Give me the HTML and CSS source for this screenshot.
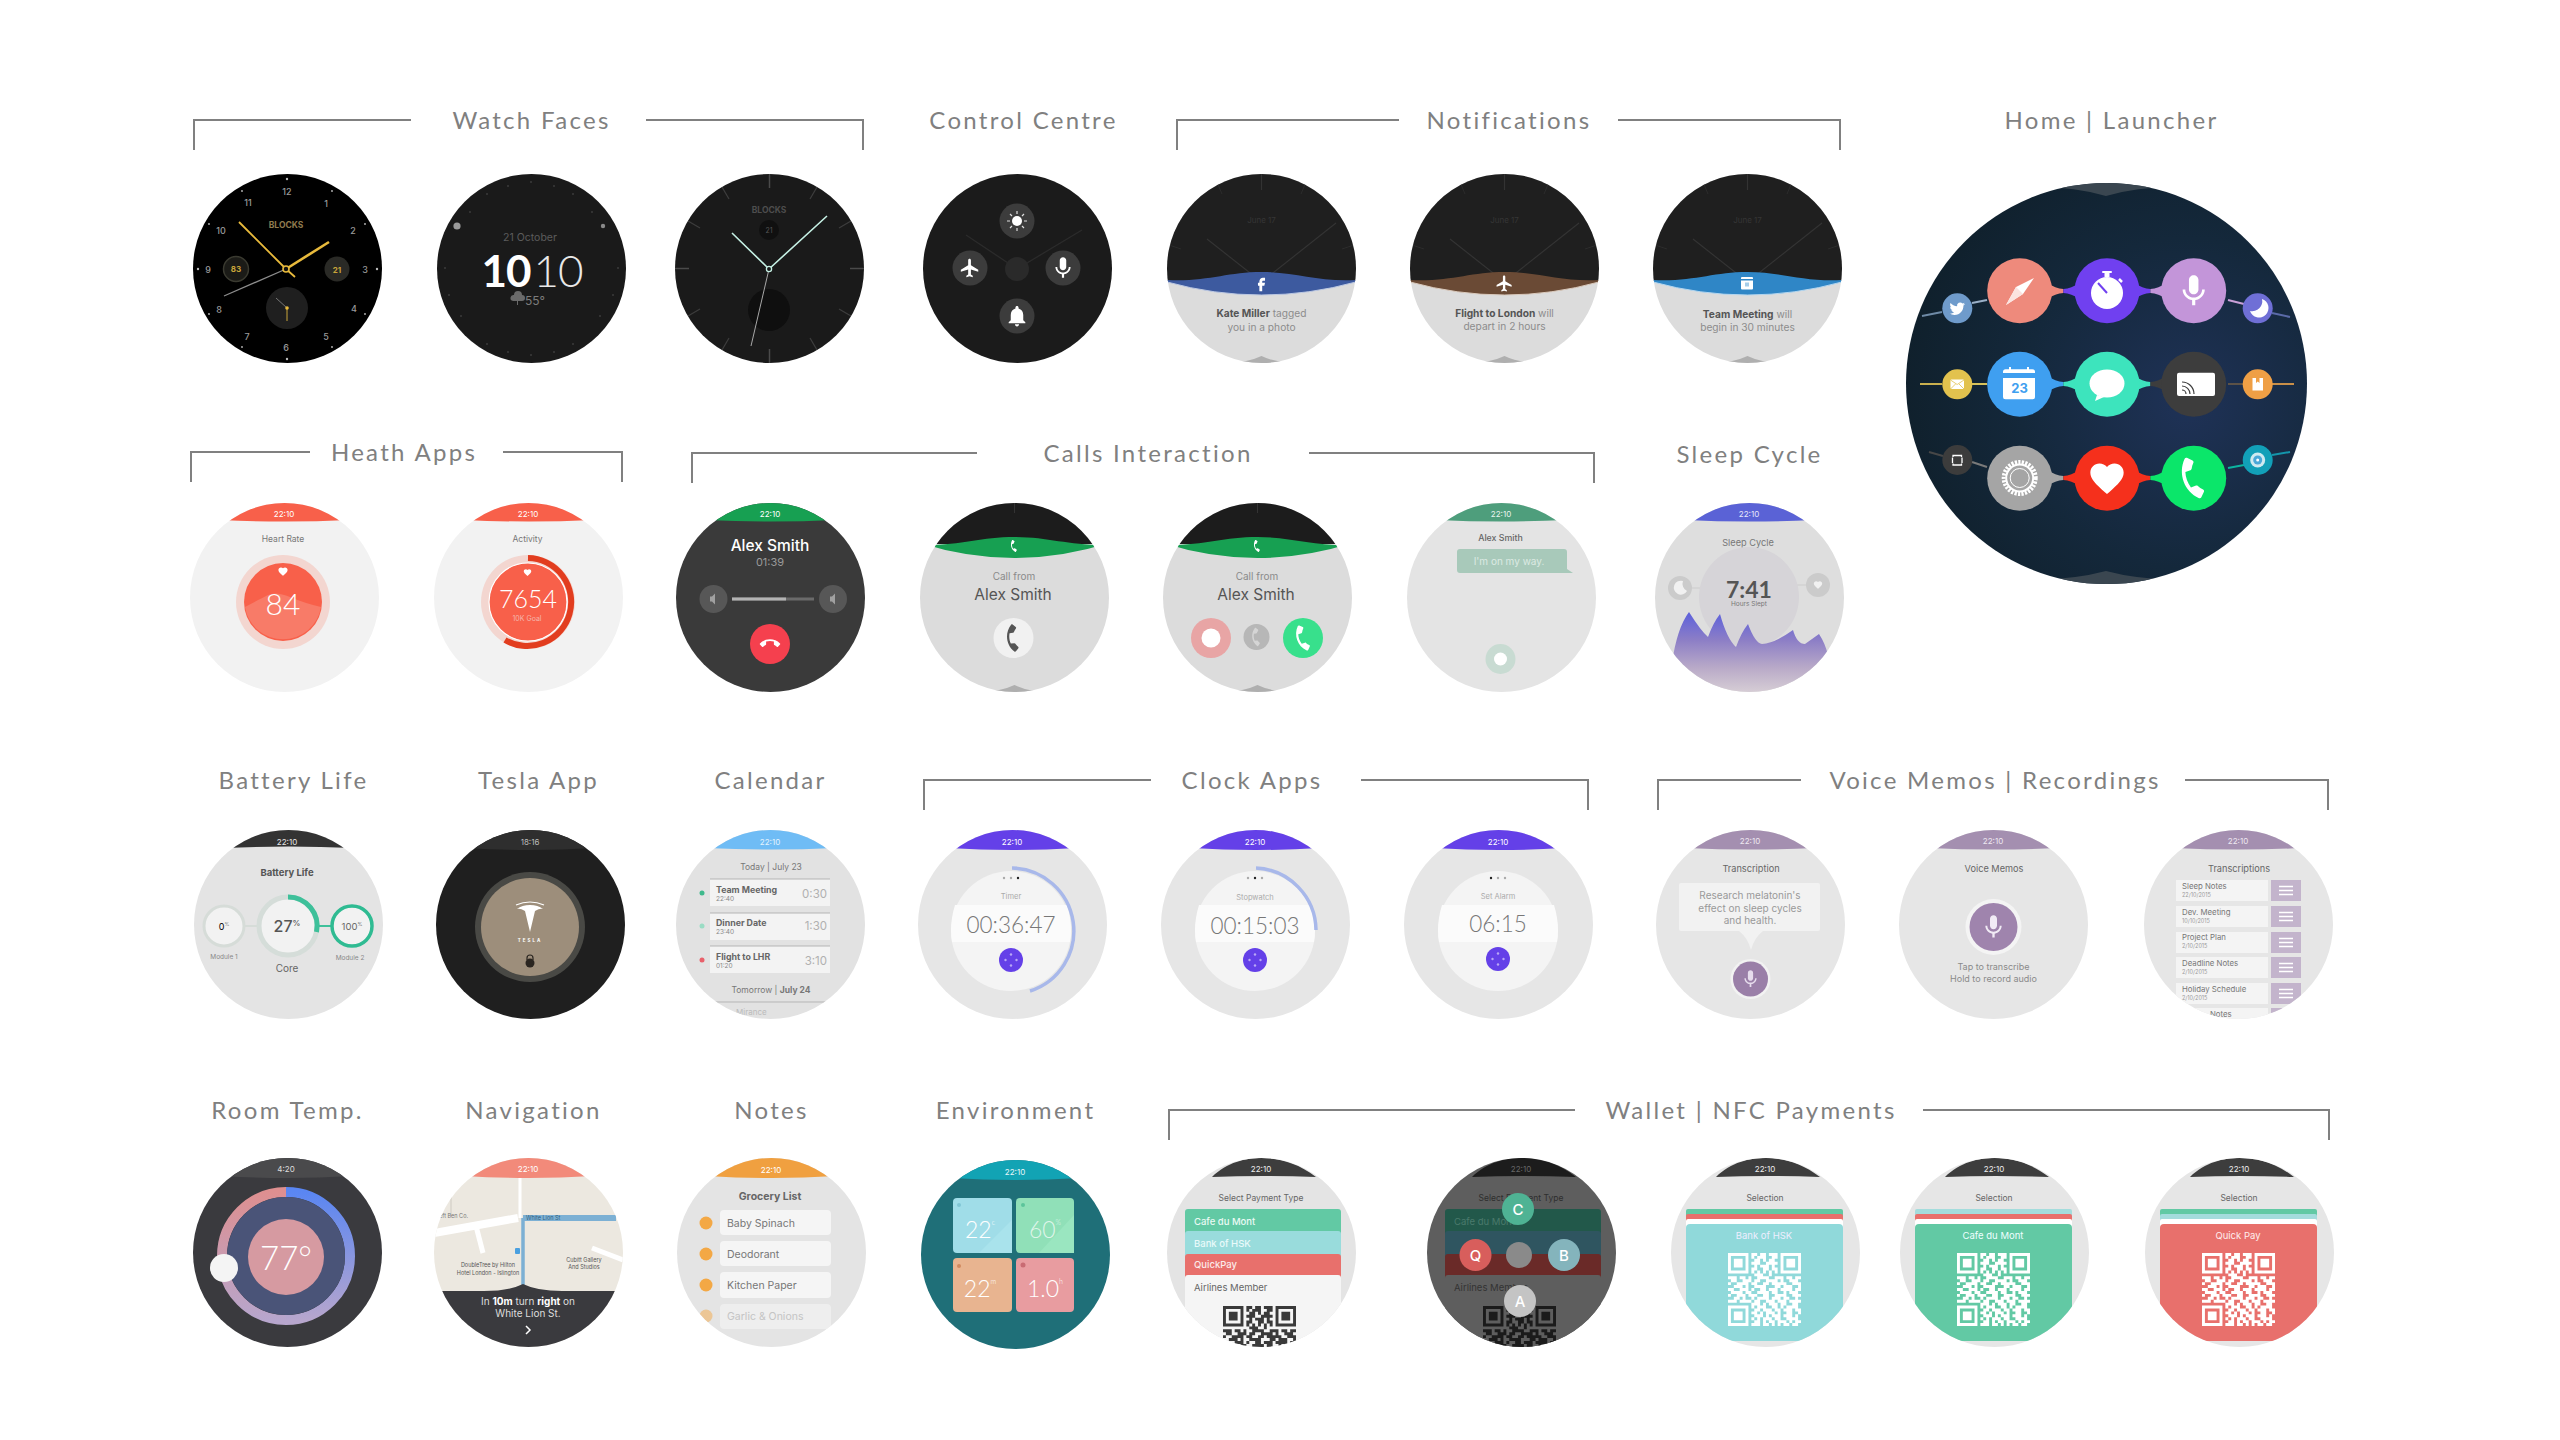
FILE: index.html
```html
<!DOCTYPE html>
<html lang="en">
<head>
<meta charset="utf-8">
<title>Blocks Watch UI</title>
<link rel="stylesheet" href="styles.css">
</head>
<body>
<svg class="defs" aria-hidden="true">
  <defs>
    <symbol id="phone" viewBox="0 0 24 24"><path d="M6.62 10.79c1.44 2.83 3.76 5.14 6.59 6.59l2.2-2.2c.27-.27.67-.36 1.02-.24 1.12.37 2.33.57 3.57.57.55 0 1 .45 1 1V20c0 .55-.45 1-1 1-9.39 0-17-7.61-17-17 0-.55.45-1 1-1h3.5c.55 0 1 .45 1 1 0 1.25.2 2.45.57 3.57.11.35.03.74-.25 1.02l-2.2 2.2z"/></symbol>
    <symbol id="mic" viewBox="0 0 24 24"><path d="M12 14c1.66 0 2.99-1.34 2.99-3L15 5c0-1.66-1.34-3-3-3S9 3.34 9 5v6c0 1.66 1.34 3 3 3zm5.3-3c0 3-2.54 5.1-5.3 5.1S6.7 14 6.7 11H5c0 3.41 2.72 6.23 6 6.72V21h2v-3.28c3.28-.48 6-3.3 6-6.72h-1.7z"/></symbol>
    <symbol id="plane" viewBox="0 0 24 24"><path d="M21 16v-2l-8-5V3.5c0-.83-.67-1.5-1.5-1.5S10 2.67 10 3.5V9l-8 5v2l8-2.5V19l-2 1.5V22l3.5-1 3.5 1v-1.5L13 19v-5.5l8 2.5z"/></symbol>
    <symbol id="bell" viewBox="0 0 24 24"><path d="M12 22c1.1 0 2-.9 2-2h-4c0 1.1.9 2 2 2zm6-6v-5c0-3.07-1.63-5.64-4.5-6.32V4c0-.83-.67-1.5-1.5-1.5s-1.5.67-1.5 1.5v.68C7.64 5.36 6 7.92 6 11v5l-2 2v1h16v-1l-2-2z"/></symbol>
    <symbol id="heart" viewBox="0 0 24 24"><path d="M12 21.35l-1.45-1.32C5.4 15.36 2 12.28 2 8.5 2 5.42 4.42 3 7.5 3c1.74 0 3.41.81 4.5 2.09C13.09 3.81 14.76 3 16.5 3 19.58 3 22 5.42 22 8.5c0 3.78-3.4 6.86-8.55 11.54L12 21.35z"/></symbol>
    <symbol id="bird" viewBox="0 0 24 24"><path d="M23.95 4.57a10 10 0 0 1-2.82.77 4.96 4.96 0 0 0 2.16-2.72c-.95.56-2 .96-3.13 1.19a4.92 4.92 0 0 0-8.38 4.48C7.69 8.1 4.07 6.13 1.64 3.16a4.82 4.82 0 0 0-.67 2.48c0 1.71.87 3.21 2.19 4.1a4.9 4.9 0 0 1-2.23-.61v.06c0 2.39 1.7 4.38 3.95 4.83a4.9 4.9 0 0 1-2.21.08c.63 1.95 2.45 3.38 4.6 3.42A9.87 9.87 0 0 1 0 19.54a14 14 0 0 0 7.56 2.21c9.05 0 14-7.5 14-13.98 0-.21 0-.42-.01-.63a10 10 0 0 0 2.4-2.57z"/></symbol>
    <symbol id="fb" viewBox="0 0 24 24"><path d="M14 8h3V4h-3c-2.76 0-5 2.24-5 5v2H7v4h2v8h4v-8h3l1-4h-4V9c0-.55.45-1 1-1z"/></symbol>
    <symbol id="qr" viewBox="0 0 25 25">
      <path fill="currentColor" fill-rule="evenodd" d="M0 0h7v7H0zM1 1v5h5V1zM2 2h3v3H2zM18 0h7v7h-7zM19 1v5h5V1zM20 2h3v3h-3zM0 18h7v7H0zM1 19v5h5v-5zM2 20h3v3H2z"/>
      <path fill="none" stroke="currentColor" stroke-width="1" d="M8 .5h2M11 .5h2M14 .5h3M8 1.5h1M10 1.5h3M15 1.5h2M9 2.5h2M12 2.5h1M14 2.5h2M8 3.5h3M13 3.5h4M9 4.5h1M11 4.5h3M15 4.5h1M8 5.5h2M12 5.5h2M15 5.5h2M8 6.5h1M10 6.5h1M12 6.5h1M14 6.5h1M16 6.5h1M9 7.5h3M14 7.5h1M0 8.5h3M4 8.5h2M7 8.5h1M10 8.5h4M16 8.5h3M20 8.5h2M23 8.5h2M1 9.5h2M5 9.5h3M9 9.5h2M13 9.5h4M18 9.5h1M21 9.5h3M0 10.5h1M3 10.5h4M8 10.5h2M12 10.5h2M15 10.5h5M22 10.5h3M2 11.5h3M6 11.5h1M9 11.5h4M16 11.5h2M19 11.5h3M24 11.5h1M0 12.5h2M4 12.5h3M8 12.5h1M11 12.5h2M14 12.5h3M18 12.5h4M23 12.5h2M1 13.5h4M6 13.5h2M10 13.5h4M15 13.5h2M19 13.5h1M21 13.5h3M0 14.5h1M3 14.5h3M7 14.5h3M12 14.5h2M16 14.5h4M22 14.5h3M2 15.5h2M5 15.5h1M8 15.5h1M10 15.5h4M15 15.5h3M19 15.5h2M23 15.5h1M0 16.5h3M4 16.5h4M9 16.5h2M13 16.5h3M17 16.5h3M21 16.5h4M8 17.5h3M12 17.5h1M14 17.5h3M18 17.5h2M22 17.5h2M8 18.5h1M10 18.5h3M15 18.5h2M18 18.5h1M20 18.5h4M9 19.5h2M12 19.5h3M16 19.5h2M19 19.5h3M23 19.5h2M8 20.5h2M11 20.5h1M13 20.5h3M17 20.5h1M20 20.5h2M24 20.5h1M9 21.5h3M13 21.5h1M15 21.5h3M19 21.5h3M23 21.5h1M8 22.5h1M10 22.5h1M12 22.5h3M16 22.5h2M20 22.5h4M9 23.5h2M12 23.5h1M14 23.5h2M17 23.5h3M21 23.5h1M23 23.5h2M8 24.5h3M12 24.5h2M15 24.5h1M17 24.5h1M19 24.5h2M22 24.5h2"/>
    </symbol>
    <symbol id="dim-clock" viewBox="0 0 189 189">
      <path d="M94.500 0v16M40 65l54.500 43L169 49" fill="none" stroke="#333" stroke-width="1.200"/>
      <path d="M50 8l5 12M139 8l-5 12M2 71l12 4M187 71l-12 4" stroke="#2c2c2c" stroke-width="1"/>
      <text class="m" x="94.500" y="46" font-size="8" fill="#363636">June 17</text>
    </symbol>
    <symbol id="purple-btn" viewBox="0 0 24 24">
      <circle cx="12" cy="12" r="12" fill="#6440e8"/>
      <circle cx="12" cy="6.500" r="1.200" fill="#b9a8f5"/><circle cx="12" cy="17.500" r="1.200" fill="#b9a8f5"/><circle cx="6.500" cy="12" r="1.200" fill="#b9a8f5"/><circle cx="17.500" cy="12" r="1.200" fill="#b9a8f5"/>
    </symbol>
    <symbol id="menu-btn" viewBox="0 0 30 21">
      <rect width="30" height="21" fill="#c3b4cc"/>
      <path d="M8 6.500h14M8 10.500h14M8 14.500h14" stroke="#fff" stroke-width="1.400"/>
    </symbol>
    <linearGradient id="ring-left" x1="0" y1="0" x2="0" y2="1"><stop offset="0" stop-color="#de8f90"/><stop offset="1" stop-color="#b7a6cd"/></linearGradient>
    <linearGradient id="ring-right" x1="0" y1="0" x2="0" y2="1"><stop offset="0" stop-color="#5a86f2"/><stop offset="1" stop-color="#b7a6cd"/></linearGradient>
    <linearGradient id="sleep-fill" x1="0" y1="0" x2="0" y2="1"><stop offset="0" stop-color="#5c60dc"/><stop offset=".35" stop-color="#8c7ec6"/><stop offset=".7" stop-color="#b9aac8"/><stop offset="1" stop-color="#d6cdd5"/></linearGradient>
    <radialGradient id="home-bg" cx=".7" cy=".55" r=".75"><stop offset="0" stop-color="#1f3257"/><stop offset=".55" stop-color="#14283b"/><stop offset="1" stop-color="#0f1f2a"/></radialGradient>
    <path id="neck-l" d="M-16-8Q-8-2.500 0-2V2Q-8 2.500-16 8Z"/>
    <path id="neck-r" d="M16-8Q8-2.500 0-2V2Q8 2.500 16 8Z"/>
  </defs>
</svg>

<main class="sheet">
  <div class="top">
    <div class="top-left">
      <section class="row row-1">
        <div class="group">
          <div class="head"><span class="rule rule-l"></span><h2 class="label pad-watch">Watch Faces</h2><span class="rule rule-r"></span></div>
          <div class="faces">
            <svg class="face" viewBox="0 0 189 189">
              <rect width="189" height="189" fill="#000"/>
              <g class="sb" fill="#9a9a9a" font-size="9">
                <text class="m" x="94" y="17">12</text><text class="m" x="133" y="29">1</text><text class="m" x="160" y="56">2</text><text class="m" x="172" y="95">3</text><text class="m" x="161" y="134">4</text><text class="m" x="133" y="162">5</text><text class="m" x="93" y="173">6</text><text class="m" x="54" y="162">7</text><text class="m" x="26" y="135">8</text><text class="m" x="15" y="95">9</text><text class="m" x="28" y="56">10</text><text class="m" x="55" y="28">11</text>
              </g>
              <g fill="#bbb">
                <circle cx="94" cy="5" r="1.200"/><circle cx="139" cy="17" r=".9"/><circle cx="172" cy="50" r=".9"/><circle cx="184" cy="95" r="1.200"/><circle cx="172" cy="140" r=".9"/><circle cx="139" cy="173" r=".9"/><circle cx="94" cy="185" r="1.200"/><circle cx="49" cy="173" r=".9"/><circle cx="16" cy="140" r=".9"/><circle cx="5" cy="95" r="1.200"/><circle cx="16" cy="50" r=".9"/><circle cx="49" cy="17" r=".9"/>
              </g>
              <text class="m b" x="93" y="51" font-size="8.500" fill="#8f7b4e">BLOCKS</text>
              <circle cx="43" cy="95" r="12.500" fill="#1b1b17" stroke="#3a3a30" stroke-width="1.500"/><text class="m b" x="43" y="95" font-size="8" fill="#c9a53a">83</text>
              <circle cx="144" cy="95" r="12.500" fill="#2a2a26"/><text class="m b" x="144" y="96" font-size="8" fill="#c9a53a">21</text>
              <circle cx="94" cy="134" r="21" fill="#1f1f1f"/>
              <path d="M94 134L83 124" stroke="#777" stroke-width="1"/><path d="M94 134v13" stroke="#c9a53a" stroke-width="1"/>
              <circle cx="94" cy="134" r="1.800" fill="#e8ba3c"/>
              <path d="M93 95L31 122" stroke="#8d8d8d" stroke-width="1.300"/>
              <path d="M102 103L93 95L46 48" fill="none" stroke="#e8ba3c" stroke-width="1.800"/>
              <path d="M93 95L136 68" stroke="#e8ba3c" stroke-width="2.600"/>
              <circle cx="93" cy="95" r="3" fill="#111" stroke="#e8ba3c" stroke-width="1.600"/>
            </svg>
            <svg class="face g55" viewBox="0 0 189 189">
              <rect width="189" height="189" fill="#1a1a1a"/>
              <g fill="#3b3b3b"><circle cx="94" cy="8" r="1"/><circle cx="71" cy="12" r="1"/><circle cx="117" cy="12" r="1"/><circle cx="136" cy="20" r="1"/><circle cx="50" cy="20" r="1"/><circle cx="155" cy="38" r="1"/><circle cx="33" cy="38" r="1"/><circle cx="8" cy="94" r="1"/><circle cx="181" cy="94" r="1"/><circle cx="176" cy="121" r="1"/><circle cx="12" cy="121" r="1"/><circle cx="163" cy="142" r="1"/><circle cx="24" cy="142" r="1"/><circle cx="136" cy="170" r="1"/><circle cx="50" cy="170" r="1"/><circle cx="117" cy="178" r="1"/><circle cx="71" cy="178" r="1"/><circle cx="94" cy="181" r="1"/></g>
              <circle cx="20" cy="52" r="3.600" fill="#9a9a9a"/><circle cx="166" cy="52" r="2.200" fill="#8a8a8a"/>
              <text class="m" x="93" y="63" font-size="10.500" fill="#5c5c5c">21 October</text>
              <text class="m num big10" x="69" y="96" font-size="44" font-weight="700" fill="#fff">10</text>
              <text class="m num big10" x="121" y="96" font-size="44" font-weight="300" fill="#e8e8e8">10</text>
              <path d="M76 127h9a3 3 0 0 0 0-6a4 4 0 0 0-8 0a3 3 0 0 0-1 6zM80 127h1v4h-1z" fill="#6a6a6a"/>
              <text class="m" x="98" y="126" font-size="12" fill="#7c7c7c">55°</text>
            </svg>
            <svg class="face g49" viewBox="0 0 189 189">
              <rect width="189" height="189" fill="#1a1a1a"/>
              <path d="M94.500 0v14M94.500 175v14M0 94.500h14M175 94.500h14" stroke="#4a4a4a" stroke-width="1.500"/>
              <path d="M47 13l7 12M142 13l-7 12M13 47l12 7M176 47l-12 7M13 142l12-7M176 142l-12-7M47 176l7-12M142 176l-7-12" stroke="#3c3c3c" stroke-width="1.300"/>
              <text class="m b" x="94" y="36" font-size="8.500" fill="#4d4d4d">BLOCKS</text>
              <circle cx="94" cy="56" r="10" fill="#101010"/><text class="m" x="94" y="56" font-size="7" fill="#555">21</text>
              <circle cx="94" cy="136" r="21" fill="#0f0f0f"/>
              <path d="M94 95L76 172" stroke="#a8a8a8" stroke-width="1"/>
              <path d="M94 95L57 59M94 95L152 42" stroke="#c5f0e4" stroke-width="1.600"/>
              <circle cx="94" cy="95" r="2.600" fill="#1a1a1a" stroke="#c5f0e4" stroke-width="1.300"/>
            </svg>
          </div>
        </div>
        <div class="group one g59">
          <div class="head solo"><h2 class="label nudge-12">Control Centre</h2></div>
          <div class="faces">
            <svg class="face" viewBox="0 0 189 189">
              <rect width="189" height="189" fill="#1b1b1b"/>
              <path d="M94 95L43 61M94 95L159 56" stroke="#2b2b2b" stroke-width="1.300"/>
              <circle cx="94" cy="95" r="12" fill="#2a2a2a"/>
              <circle cx="94" cy="47" r="17.500" fill="#3c3c3c"/><circle cx="47" cy="94" r="17.500" fill="#3c3c3c"/><circle cx="140" cy="94" r="17.500" fill="#3c3c3c"/><circle cx="94" cy="142" r="17.500" fill="#3c3c3c"/>
              <circle cx="94" cy="47" r="5" fill="#fff"/>
              <path d="M94 37v3M94 54v3M84 47h3M101 47h3M87 40l2 2M99 52l2 2M101 40l-2 2M89 52l-2 2" stroke="#ddd" stroke-width="1.200"/>
              <use href="#plane" x="36" y="83" width="22" height="22" fill="#fff"/>
              <use href="#mic" x="127" y="81" width="26" height="26" fill="#fff"/>
              <use href="#bell" x="81.500" y="129.500" width="25" height="25" fill="#fff"/>
            </svg>
          </div>
        </div>
        <div class="group g55">
          <div class="head notif-head"><span class="rule rule-l"></span><h2 class="label pad-notif">Notifications</h2><span class="rule rule-r"></span></div>
          <div class="faces">
            <svg class="face" viewBox="0 0 189 189">
              <rect width="189" height="189" fill="#dcdcdc"/>
              <path d="M0 0h189v107H0z" fill="#1f1f1f"/>
              <use href="#dim-clock" width="189" height="189"/>
              <path d="M0 106C40 108 60 98 94.500 98S150 108 189 106V108Q94.500 134 0 108Z" fill="#3d5a9f"/>
              <path d="M0 108Q94.500 134 189 108" fill="none" stroke="#bcc8e2" stroke-width="1"/>
              <use href="#fb" x="86" y="101" width="17" height="17" fill="#fff"/>
              <text class="m" x="94.500" y="139" font-size="10.200" fill="#8c8c8c"><tspan class="b" fill="#555">Kate Miller</tspan> tagged</text>
              <text class="m" x="94.500" y="153" font-size="10.200" fill="#8c8c8c">you in a photo</text>
              <path d="M58 189Q80 189 94.500 182Q109 189 131 189Z" fill="#afafaf"/>
            </svg>
            <svg class="face g54" viewBox="0 0 189 189">
              <rect width="189" height="189" fill="#dcdcdc"/>
              <path d="M0 0h189v107H0z" fill="#1f1f1f"/>
              <use href="#dim-clock" width="189" height="189"/>
              <path d="M0 106C40 108 60 98 94.500 98S150 108 189 106V108Q94.500 134 0 108Z" fill="#6a4a35"/>
              <path d="M0 108Q94.500 134 189 108" fill="none" stroke="#d9c9bc" stroke-width="1"/>
              <use href="#plane" x="85" y="100" width="19" height="19" fill="#fff"/>
              <text class="m" x="94.500" y="139" font-size="10.200" fill="#8c8c8c"><tspan class="b" fill="#555">Flight to London</tspan> will</text>
              <text class="m" x="94.500" y="152" font-size="10.200" fill="#8c8c8c">depart in 2 hours</text>
              <path d="M58 189Q80 189 94.500 182Q109 189 131 189Z" fill="#afafaf"/>
            </svg>
            <svg class="face g54" viewBox="0 0 189 189">
              <rect width="189" height="189" fill="#dcdcdc"/>
              <path d="M0 0h189v107H0z" fill="#1f1f1f"/>
              <use href="#dim-clock" width="189" height="189"/>
              <path d="M0 106C40 108 60 98 94.500 98S150 108 189 106V108Q94.500 134 0 108Z" fill="#2f86c6"/>
              <path d="M0 108Q94.500 134 189 108" fill="none" stroke="#b4d6ef" stroke-width="1"/>
              <rect x="88" y="103" width="12" height="12.500" rx="1" fill="#fff"/><rect x="88" y="105" width="12" height="1.500" fill="#2f86c6"/><rect x="92" y="108.500" width="4" height="4" fill="#a5cde9"/>
              <text class="m" x="94.500" y="140" font-size="10.200" fill="#8c8c8c"><tspan class="b" fill="#555">Team Meeting</tspan> will</text>
              <text class="m" x="94.500" y="153" font-size="10.200" fill="#8c8c8c">begin in 30 minutes</text>
              <path d="M58 189Q80 189 94.500 182Q109 189 131 189Z" fill="#afafaf"/>
            </svg>
          </div>
        </div>
      </section>

      <section class="row row-2">
        <div class="group">
          <div class="head"><span class="rule rule-l"></span><h2 class="label pad-heath">Heath Apps</h2><span class="rule rule-r"></span></div>
          <div class="faces">
            <svg class="face" viewBox="0 0 189 189">
              <rect width="189" height="189" fill="#f2f2f2"/>
              <path d="M30 17Q94.500 20 159 17V-5H30Z" fill="#f8604a"/><text class="m" x="94" y="11" font-size="8" fill="#fff">22:10</text>
              <text class="m" x="93" y="36" font-size="8.500" fill="#777">Heart Rate</text>
              <circle cx="93" cy="99" r="47" fill="#f3d6d0"/><circle cx="93" cy="99" r="39" fill="#f8604a"/>
              <path d="M55 104Q70 96 78 92T100 94T131 104A38.500 38.500 0 0 1 55 104Z" fill="#f87b68"/>
              <use href="#heart" x="87.500" y="63" width="11" height="11" fill="#fff"/>
              <text class="m num th" x="93" y="100" font-size="30" fill="#fff">84</text>
            </svg>
            <svg class="face g55" viewBox="0 0 189 189">
              <rect width="189" height="189" fill="#f2f2f2"/>
              <path d="M30 17Q94.500 20 159 17V-5H30Z" fill="#f8604a"/><text class="m" x="94" y="11" font-size="8" fill="#fff">22:10</text>
              <text class="m" x="93.500" y="36" font-size="8.500" fill="#777">Activity</text>
              <circle cx="94" cy="99" r="47" fill="#f3d6d0"/><circle cx="94" cy="99" r="39" fill="#f8604a" stroke="#fff" stroke-width="1.200"/>
              <path d="M94 55A44 44 0 1 1 71 137" fill="none" stroke="#e23d1f" stroke-width="6"/>
              <use href="#heart" x="89" y="65" width="9" height="9" fill="#fff"/>
              <text class="m num th" x="94" y="95" font-size="25" fill="#fff">7654</text>
              <text class="m" x="93" y="115" font-size="7" fill="#f5b5aa">10K Goal</text>
            </svg>
          </div>
        </div>
        <div class="group g53">
          <div class="head calls-head"><span class="rule rule-l"></span><h2 class="label pad-calls">Calls Interaction</h2><span class="rule rule-r"></span></div>
          <div class="faces">
            <svg class="face" viewBox="0 0 189 189">
              <rect width="189" height="189" fill="#3a3a3a"/>
              <path d="M30 17Q94.500 20 159 17V-5H30Z" fill="#17a052"/><text class="m" x="94" y="11" font-size="8" fill="#fff">22:10</text>
              <text class="m sb" x="94" y="42" font-size="15.500" fill="#fff">Alex Smith</text>
              <text class="m" x="94" y="59" font-size="11" fill="#9b9b9b">01:39</text>
              <circle cx="37.500" cy="96" r="14" fill="#575757"/><circle cx="157" cy="96" r="14" fill="#575757"/>
              <path d="M34 93.500h2l3-3v11l-3-3h-2zM154 93.500h2l3-3v11l-3-3h-2z" fill="#a0a0a0"/>
              <rect x="56" y="94.500" width="82" height="3" fill="#6a6a6a"/><rect x="56" y="94.500" width="54" height="3" fill="#b3b3b3"/>
              <circle cx="94" cy="141" r="20" fill="#f5404e"/>
              <use href="#phone" x="84" y="131" width="20" height="20" fill="#fff" transform="rotate(135 94 141)"/>
            </svg>
            <svg class="face g55" viewBox="0 0 189 189">
              <rect width="189" height="189" fill="#dcdcdc"/>
              <path d="M0 0h189v41H0z" fill="#1c1c1c"/>
              <path d="M94.500 0v10" stroke="#333"/>
              <path d="M0 42C40 43 60 34 94.500 34S150 43 189 42V40Q94.500 70 0 40Z" fill="#17a052"/>
              <use href="#phone" x="88" y="37" width="12" height="12" fill="#fff" transform="rotate(30 94 43)"/>
              <text class="m" x="94" y="73" font-size="10" fill="#8a8a8a">Call from</text>
              <text class="m" x="93" y="91" font-size="15.500" fill="#555">Alex Smith</text>
              <circle cx="93.500" cy="135" r="20" fill="#f1f1f1"/>
              <use href="#phone" x="80" y="121.500" width="27" height="27" fill="#555" transform="rotate(38 93.500 135)"/>
              <path d="M58 189Q80 189 94.500 182Q109 189 131 189Z" fill="#afafaf"/>
            </svg>
            <svg class="face g54" viewBox="0 0 189 189">
              <rect width="189" height="189" fill="#dcdcdc"/>
              <path d="M0 0h189v41H0z" fill="#1c1c1c"/>
              <path d="M94.500 0v10" stroke="#333"/>
              <path d="M0 42C40 43 60 34 94.500 34S150 43 189 42V40Q94.500 70 0 40Z" fill="#17a052"/>
              <use href="#phone" x="88" y="37" width="12" height="12" fill="#fff" transform="rotate(30 94 43)"/>
              <text class="m" x="94" y="73" font-size="10" fill="#8a8a8a">Call from</text>
              <text class="m" x="93" y="91" font-size="15.500" fill="#555">Alex Smith</text>
              <circle cx="48" cy="135" r="20" fill="#e8a5a5"/><circle cx="48" cy="135" r="9.500" fill="#fff"/>
              <circle cx="93.500" cy="134" r="13" fill="#b7b7b7"/>
              <use href="#phone" x="84.500" y="125" width="18" height="18" fill="#d5d5d5" transform="rotate(38 93.500 134)"/>
              <circle cx="140" cy="135" r="20" fill="#38e08c"/>
              <use href="#phone" x="127" y="122" width="26" height="26" fill="#fff" transform="rotate(25 140 135)"/>
              <path d="M58 189Q80 189 94.500 182Q109 189 131 189Z" fill="#afafaf"/>
            </svg>
            <svg class="face g55" viewBox="0 0 189 189">
              <rect width="189" height="189" fill="#e4e4e4"/>
              <path d="M30 17Q94.500 20 159 17V-5H30Z" fill="#4e9e7c"/><text class="m" x="94" y="11" font-size="8" fill="#e8f3ee">22:10</text>
              <text class="m sb" x="93.500" y="34" font-size="8.800" fill="#666">Alex Smith</text>
              <path d="M53 46H157a3 3 0 0 1 3 3V66L166 70H53a3 3 0 0 1-3-3V49a3 3 0 0 1 3-3Z" fill="#a8c9ba"/>
              <text class="m" x="102" y="58" font-size="10" fill="#dce9e3">I'm on my way.</text>
              <circle cx="93.500" cy="156" r="15" fill="#c8dbd2"/><circle cx="93.500" cy="156" r="6.500" fill="#fff"/>
            </svg>
          </div>
        </div>
        <div class="group one g59">
          <div class="head solo calls-head"><h2 class="label">Sleep Cycle</h2></div>
          <div class="faces">
            <svg class="face" viewBox="0 0 189 189">
              <rect width="189" height="189" fill="#dedede"/>
              <path d="M30 17Q94.500 20 159 17V-5H30Z" fill="#5a62d6"/><text class="m" x="94" y="11" font-size="8" fill="#e6e7fa">22:10</text>
              <text class="m" x="93" y="39" font-size="9.200" fill="#777">Sleep Cycle</text>
              <path d="M25 85h28M136 82h27" stroke="#ccc" stroke-width="1"/>
              <circle cx="94" cy="94" r="50" fill="#d6d4d8"/>
              <circle cx="25" cy="85" r="12" fill="#cbcbcb"/><circle cx="163" cy="82" r="12" fill="#cbcbcb"/>
              <path d="M28 78a7 7 0 1 0 4 10a8 8 0 0 1-4-10z" fill="#f1f1f1"/>
              <use href="#heart" x="158" y="77" width="10" height="10" fill="#f1f1f1"/>
              <text class="m num b" x="94" y="86" font-size="23" fill="#555">7:41</text>
              <text class="m" x="94" y="101" font-size="6.500" fill="#777">Hours Slept</text>
              <path d="M17 160Q22 125 34 109Q46 128 53 134Q58 120 65 111Q72 136 81 144Q86 130 93 121Q100 140 107 141Q120 140 138 127Q142 141 150 141Q157 136 164 131Q170 140 173 152V189H17Z" fill="url(#sleep-fill)"/>
            </svg>
          </div>
        </div>
      </section>
    </div>

    <section class="group home-group g62">
      <div class="head solo home-head"><h2 class="label nudge-10">Home | Launcher</h2></div>
      <svg class="face home" viewBox="0 0 401 401">
        <rect width="401" height="401" fill="url(#home-bg)"/>
        <path d="M130 0H270V4Q230 4 200 13Q170 4 130 4Z" fill="#3a4650"/>
        <path d="M130 401H270V397Q230 396 200 388Q170 396 130 397Z" fill="#3a4650"/>
        <g stroke-width="2">
          <path d="M16 133L36 129" stroke="#6e8aa6"/><path d="M66 120L81 117" stroke="#9ab0c8"/>
          <path d="M322 117L338 121" stroke="#c9a0d8"/><path d="M366 130L384 134" stroke="#5a6aa8"/>
          <path d="M14 201H36" stroke="#c9b04e"/><path d="M66 201H81" stroke="#d8c25a"/>
          <path d="M322 201H338" stroke="#5c5247"/><path d="M366 201H388" stroke="#c98f48"/>
          <path d="M23 269L37 273" stroke="#474747"/><path d="M66 279L81 284" stroke="#7a7a7a"/>
          <path d="M322 285L338 282" stroke="#0cb4a0"/><path d="M366 272L384 269" stroke="#1495ab"/>
        </g>
        <use href="#neck-l" x="157.400" y="108" fill="#ee8a7c"/><use href="#neck-r" x="157.400" y="108" fill="#7040f0"/>
        <use href="#neck-l" x="244.400" y="108" fill="#7040f0"/><use href="#neck-r" x="244.400" y="108" fill="#c395d9"/>
        <use href="#neck-l" x="157.400" y="201" fill="#3f9ff0"/><use href="#neck-r" x="157.400" y="201" fill="#3de4bd"/>
        <use href="#neck-l" x="244.400" y="201" fill="#3de4bd"/><use href="#neck-r" x="244.400" y="201" fill="#3d3d3d"/>
        <use href="#neck-l" x="157.400" y="295" fill="#a5a5a5"/><use href="#neck-r" x="157.400" y="295" fill="#f5301c"/>
        <use href="#neck-l" x="244.400" y="295" fill="#f5301c"/><use href="#neck-r" x="244.400" y="295" fill="#0be66a"/>

        <circle cx="113.700" cy="107.700" r="32.500" fill="#ee8a7c"/>
        <circle cx="201" cy="107.700" r="32.500" fill="#7040f0"/>
        <circle cx="287.700" cy="107.700" r="32.500" fill="#c395d9"/>
        <circle cx="51.300" cy="125.300" r="15" fill="#6f9bcb"/>
        <circle cx="351.700" cy="125.300" r="15" fill="#6f6fd6"/>
        <circle cx="113.700" cy="201.300" r="32.500" fill="#3f9ff0"/>
        <circle cx="201" cy="201.300" r="32.500" fill="#3de4bd"/>
        <circle cx="287.700" cy="201.300" r="32.500" fill="#3d3d3d"/>
        <circle cx="51.300" cy="201.300" r="15" fill="#e2c24e"/>
        <circle cx="351.700" cy="201.300" r="15" fill="#ef9f45"/>
        <circle cx="113.700" cy="295.300" r="32.500" fill="#a5a5a5"/>
        <circle cx="201" cy="295.300" r="32.500" fill="#f5301c"/>
        <circle cx="287.700" cy="295.300" r="32.500" fill="#0be66a"/>
        <circle cx="51.300" cy="277" r="15" fill="#3c3c3c"/>
        <circle cx="351.700" cy="277" r="15" fill="#12a0b8"/>

        <path d="M128 95L117 111L100 122L110 104Z" fill="#fff"/><path d="M117 111L100 122L110 104Z" fill="#fbe3df"/>
        <circle cx="201" cy="110" r="16" fill="#fff"/><rect x="198.500" y="89" width="5" height="5" fill="#fff"/><rect x="196" y="88" width="10" height="2" rx="1" fill="#fff"/><path d="M213 96l3 3" stroke="#fff" stroke-width="2.500"/>
        <path d="M201 110L192 100" stroke="#7040f0" stroke-width="2"/>
        <use href="#mic" x="268.700" y="89" width="38" height="38" fill="#fff"/>
        <use href="#bird" x="43.500" y="118" width="15.500" height="15.500" fill="#fff"/>
        <path d="M356 116a9.500 9.500 0 1 1-12 12a10 10 0 0 0 12-12z" fill="#fff"/>
        <rect x="44.500" y="196.500" width="13.500" height="9.500" rx="1" fill="#fff"/><path d="M44.500 197l6.700 4.500l6.800-4.500M44.500 206l5-5M58 206l-5-5" fill="none" stroke="#e2c24e" stroke-width=".8"/>
        <rect x="97" y="186.300" width="32" height="30" rx="2.500" fill="#fff"/><rect x="97" y="190" width="32" height="5" fill="#3f9ff0"/>
        <path d="M104 184v5M122 184v5" stroke="#fff" stroke-width="2"/>
        <text class="m b" x="113.500" y="205" font-size="13" fill="#3f9ff0">23</text>
        <ellipse cx="201" cy="200.500" rx="17.500" ry="14" fill="#fff"/><path d="M191 212L189 218L198 214Z" fill="#fff"/>
        <rect x="271" y="189.700" width="38" height="23.300" rx="2" fill="#fff"/>
        <path d="M276 199a12 12 0 0 1 12 12M276 203a8 8 0 0 1 8 8M276 207a4 4 0 0 1 4 4" fill="none" stroke="#3d3d3d" stroke-width="1.200"/>
        <path d="M346.500 195h10.500v12.500h-10.500z" fill="#fff"/><path d="M350 195h3.500v5l-1.750-1.500l-1.750 1.500z" fill="#ef9f45"/>
        <path d="M47 274v-1.500h8.500v1.500M47 280.500v1.500h8.500v-1.500M46.500 274.500v5.500M56 274.500v5.500" fill="none" stroke="#fff" stroke-width="1.300"/>
        <circle cx="113.700" cy="295" r="16" fill="none" stroke="#fff" stroke-width="4" stroke-dasharray="2.200 1.300"/>
        <circle cx="113.700" cy="295" r="13.500" fill="none" stroke="#fff" stroke-width="2"/>
        <circle cx="113.700" cy="295" r="9.500" fill="#a5a5a5" stroke="#fff" stroke-width="1"/>
        <use href="#heart" x="181" y="275.500" width="40" height="40" fill="#fff"/>
        <use href="#phone" x="266" y="274" width="42" height="42" fill="#fff" transform="rotate(25 287 295)"/>
        <circle cx="351.700" cy="277" r="7.500" fill="#cfeaf0"/><circle cx="351.700" cy="277" r="4.500" fill="#4aa8d8"/><circle cx="351.700" cy="277" r="1.500" fill="#fff"/>
      </svg>
    </section>
  </div>

  <section class="row row-3">
    <div class="group one">
      <div class="head solo"><h2 class="label nudge-10">Battery Life</h2></div>
      <div class="faces">
        <svg class="face" viewBox="0 0 189 189">
          <rect width="189" height="189" fill="#e4e4e4"/>
          <path d="M30 18Q94.500 15 159 18V-5H30Z" fill="#333"/><text class="m" x="93" y="12" font-size="8" fill="#e6e6e6">22:10</text>
          <text class="m b" x="93" y="42" font-size="9.500" fill="#555">Battery Life</text>
          <path d="M50 96h14M122 96h16" stroke="#d6dcd8" stroke-width="2"/>
          <circle cx="30" cy="96" r="20" fill="#f2f2f2" stroke="#d6dcd8" stroke-width="3"/>
          <circle cx="94" cy="96" r="29" fill="#f2f2f2" stroke="#d5ddd9" stroke-width="5"/>
          <path d="M94 67A29 29 0 0 1 122.500 102" fill="none" stroke="#3ec09a" stroke-width="5"/>
          <path d="M122 96h16" stroke="#3ec09a" stroke-width="2"/>
          <circle cx="158" cy="96" r="20" fill="#f2f2f2" stroke="#2fbb92" stroke-width="3.500"/>
          <text class="m" x="30" y="96" font-size="9">0<tspan font-size="5" dy="-2" fill="#777">%</tspan></text>
          <text class="m sb" x="93" y="96" font-size="16" fill="#555">27<tspan font-size="8" dy="-3">%</tspan></text>
          <text class="m" x="158" y="96" font-size="9.500" fill="#666">100<tspan font-size="5" dy="-2">%</tspan></text>
          <text class="m" x="30" y="127" font-size="6.500" fill="#888">Module 1</text>
          <text class="m" x="156" y="128" font-size="6.500" fill="#888">Module 2</text>
          <text class="m" x="93" y="138" font-size="10" fill="#666">Core</text>
        </svg>
      </div>
    </div>
    <div class="group one g53">
      <div class="head solo"><h2 class="label nudge-16">Tesla App</h2></div>
      <div class="faces">
        <svg class="face" viewBox="0 0 189 189">
          <rect width="189" height="189" fill="#1f1f1f"/>
          <path d="M30 18Q94.500 22 159 18V-5H30Z" fill="#2e2e2e"/><text class="m" x="94" y="11.500" font-size="8" fill="#bbb">18:16</text>
          <circle cx="94" cy="97" r="55" fill="#494945"/><circle cx="94" cy="97" r="49" fill="#9d8e7b"/>
          <path d="M94 102L89 81Q84 78 81 79Q86 75 94 75Q102 75 107 79Q104 78 99 81Z" fill="#fff"/>
          <path d="M80 75Q94 69 108 75" fill="none" stroke="#fff" stroke-width="1.200"/>
          <text class="m b tesla" x="94" y="110" font-size="4.500" fill="#fff">TESLA</text>
          <circle cx="94" cy="133" r="4.500" fill="#2a2520"/>
          <path d="M91 130v-2a3 3 0 0 1 6 0v2" fill="none" stroke="#2a2520" stroke-width="1.200"/>
        </svg>
      </div>
    </div>
    <div class="group one g51">
      <div class="head solo"><h2 class="label">Calendar</h2></div>
      <div class="faces">
        <svg class="face" viewBox="0 0 189 189">
          <rect width="189" height="189" fill="#e2e2e2"/>
          <path d="M30 18Q94.500 21 159 18V-5H30Z" fill="#6fbcf5"/><text class="m" x="94" y="12" font-size="8" fill="#e3f3fd">22:10</text>
          <text class="m" x="95" y="37" font-size="8.500" fill="#777">Today | July 23</text>
          <rect x="34" y="49" width="120" height="27" fill="#f3f3f3"/><rect x="34" y="83" width="120" height="27" fill="#f3f3f3"/><rect x="34" y="116" width="120" height="27" fill="#f3f3f3"/>
          <path d="M34 49h120M34 83h120M34 116h120" stroke="#b5b5b5" stroke-width="1"/>
          <circle cx="26" cy="63" r="2.500" fill="#3fb98c"/><circle cx="26" cy="96" r="2.500" fill="#9adcc4"/><circle cx="26" cy="130" r="2.500" fill="#e8606a"/>
          <g class="b" font-size="8.800" fill="#666"><text x="40" y="59">Team Meeting</text><text x="40" y="92">Dinner Date</text><text x="40" y="126">Flight to LHR</text></g>
          <g font-size="6.500" fill="#888"><text x="40" y="69">22:40</text><text x="40" y="102">23:40</text><text x="40" y="136">01:20</text></g>
          <g font-size="11.500" fill="#b0b0b0"><text class="e" x="151" y="64">0:30</text><text class="e" x="151" y="96">1:30</text><text class="e" x="151" y="131">3:10</text></g>
          <text class="m" x="95" y="160" font-size="8.500" fill="#777">Tomorrow | <tspan class="b">July 24</tspan></text>
          <path d="M37 172h113" stroke="#b5b5b5" stroke-width="1"/>
          <text x="60" y="182" font-size="8" fill="#bbb">Mirance</text>
        </svg>
      </div>
    </div>
    <div class="group g53">
      <div class="head clock-head"><span class="rule rule-l"></span><h2 class="label pad-clock">Clock Apps</h2><span class="rule rule-r"></span></div>
      <div class="faces">
        <svg class="face" viewBox="0 0 189 189">
          <rect width="189" height="189" fill="#e6e6e6"/>
          <path d="M30 18Q94.500 22 159 18V-5H30Z" fill="#6440e8"/><text class="m" x="94" y="12" font-size="8" fill="#fff">22:10</text>
          <circle cx="93" cy="101" r="60" fill="#f4f4f4"/>
          <path d="M37 75H149Q153 88 153 101Q153 105 152 112H34Q33 105 33 101Q33 88 37 75Z" fill="#fbfbfb"/>
          <circle cx="86" cy="48" r="1.200" fill="#aaa"/><circle cx="93" cy="48" r="1.200" fill="#aaa"/><circle cx="100" cy="48" r="1.200" fill="#222"/>
          <text class="m" x="93" y="66" font-size="7.500" fill="#aaa">Timer</text>
          <text class="m num th" x="93" y="94" font-size="22.500" fill="#777">00:36:47</text>
          <use href="#purple-btn" x="81" y="118" width="24" height="24"/>
          <path d="M94 38A63 63 0 0 1 112 161" fill="none" stroke="#a8b8ea" stroke-width="3.500"/>
        </svg>
        <svg class="face g54" viewBox="0 0 189 189">
          <rect width="189" height="189" fill="#e6e6e6"/>
          <path d="M30 18Q94.500 22 159 18V-5H30Z" fill="#6440e8"/><text class="m" x="94" y="12" font-size="8" fill="#fff">22:10</text>
          <circle cx="94" cy="101" r="60" fill="#f4f4f4"/>
          <path d="M38 75H150Q154 88 154 101Q154 105 153 112H35Q34 105 34 101Q34 88 38 75Z" fill="#fbfbfb"/>
          <circle cx="87" cy="48" r="1.200" fill="#aaa"/><circle cx="94" cy="48" r="1.200" fill="#222"/><circle cx="101" cy="48" r="1.200" fill="#aaa"/>
          <text class="m" x="94" y="67" font-size="7.500" fill="#aaa">Stopwatch</text>
          <text class="m num th" x="94" y="95" font-size="22.500" fill="#777">00:15:03</text>
          <use href="#purple-btn" x="82" y="118" width="24" height="24"/>
          <path d="M95 38A63 63 0 0 1 155 100" fill="none" stroke="#a8b8ea" stroke-width="3.500"/>
        </svg>
        <svg class="face g54" viewBox="0 0 189 189">
          <rect width="189" height="189" fill="#e6e6e6"/>
          <path d="M30 18Q94.500 22 159 18V-5H30Z" fill="#6440e8"/><text class="m" x="94" y="12" font-size="8" fill="#fff">22:10</text>
          <circle cx="94" cy="101" r="60" fill="#f4f4f4"/>
          <path d="M38 75H150Q154 88 154 101Q154 105 153 112H35Q34 105 34 101Q34 88 38 75Z" fill="#fbfbfb"/>
          <circle cx="87" cy="48" r="1.200" fill="#222"/><circle cx="94" cy="48" r="1.200" fill="#aaa"/><circle cx="101" cy="48" r="1.200" fill="#aaa"/>
          <text class="m" x="94" y="66" font-size="7.500" fill="#aaa">Set Alarm</text>
          <text class="m num th" x="94" y="93" font-size="22.500" fill="#777">06:15</text>
          <use href="#purple-btn" x="82" y="117" width="24" height="24"/>
        </svg>
      </div>
    </div>
    <div class="group g63">
      <div class="head voice-head"><span class="rule rule-l"></span><h2 class="label pad-voice">Voice Memos | Recordings</h2><span class="rule rule-r"></span></div>
      <div class="faces">
        <svg class="face" viewBox="0 0 189 189">
          <rect width="189" height="189" fill="#e6e6e6"/>
          <path d="M30 18Q94.500 21 159 18V-5H30Z" fill="#a48fb0"/><text class="m" x="94" y="11" font-size="8" fill="#eee8f1">22:10</text>
          <text class="m" x="95" y="38" font-size="9.200" fill="#666">Transcription</text>
          <path d="M25 53H162a2 2 0 0 1 2 2V99a2 2 0 0 1-2 2H107Q98 108 95 120Q92 108 83 101H25a2 2 0 0 1-2-2V55a2 2 0 0 1 2-2Z" fill="#f2f2f2"/>
          <g font-size="10" fill="#999"><text class="m" x="94" y="65">Research melatonin's</text><text class="m" x="94" y="78">effect on sleep cycles</text><text class="m" x="94" y="90">and health.</text></g>
          <circle cx="94.500" cy="149" r="20" fill="#f2f2f2"/><circle cx="94.500" cy="149" r="17.500" fill="#9a7fa8"/>
          <use href="#mic" x="84" y="138.500" width="21" height="21" fill="#e6dcec"/>
        </svg>
        <svg class="face g54" viewBox="0 0 189 189">
          <rect width="189" height="189" fill="#e6e6e6"/>
          <path d="M30 18Q94.500 21 159 18V-5H30Z" fill="#a48fb0"/><text class="m" x="94" y="11" font-size="8" fill="#eee8f1">22:10</text>
          <text class="m" x="95" y="38" font-size="9.200" fill="#666">Voice Memos</text>
          <circle cx="94.500" cy="97" r="28" fill="#f4f4f4"/><circle cx="94.500" cy="97" r="24" fill="#9f84ad"/>
          <use href="#mic" x="80.500" y="83" width="28" height="28" fill="#f1ebf5"/>
          <text class="m" x="94.500" y="136" font-size="9" fill="#8a8a8a">Tap to transcribe</text>
          <text class="m" x="94.500" y="148" font-size="9" fill="#8a8a8a">Hold to record audio</text>
        </svg>
        <svg class="face g56" viewBox="0 0 189 189">
          <rect width="189" height="189" fill="#e6e6e6"/>
          <path d="M30 18Q94.500 21 159 18V-5H30Z" fill="#a48fb0"/><text class="m" x="94" y="11" font-size="8" fill="#eee8f1">22:10</text>
          <text class="m" x="95" y="38" font-size="9.200" fill="#666">Transcriptions</text>
          <g fill="#f4f4f4"><rect x="32" y="50" width="92" height="21"/><rect x="32" y="76" width="92" height="21"/><rect x="32" y="102" width="92" height="21"/><rect x="32" y="127" width="92" height="21"/><rect x="32" y="153" width="92" height="21"/><rect x="32" y="178" width="92" height="14"/></g>
          <use href="#menu-btn" x="127" y="50" width="30" height="21"/><use href="#menu-btn" x="127" y="76" width="30" height="21"/><use href="#menu-btn" x="127" y="102" width="30" height="21"/><use href="#menu-btn" x="127" y="127" width="30" height="21"/><use href="#menu-btn" x="127" y="153" width="30" height="21"/><rect x="127" y="178" width="30" height="14" fill="#c3b4cc"/>
          <g font-size="7.800" fill="#777"><text x="38" y="56">Sleep Notes</text><text x="38" y="82">Dev. Meeting</text><text x="38" y="107">Project Plan</text><text x="38" y="133">Deadline Notes</text><text x="38" y="159">Holiday Schedule</text><text x="66" y="184">Notes</text></g>
          <g font-size="5.500" fill="#999"><text x="38" y="65">22/10/2015</text><text x="38" y="91">10/10/2015</text><text x="38" y="116">2/10/2015</text><text x="38" y="142">2/10/2015</text><text x="38" y="168">2/10/2015</text></g>
        </svg>
      </div>
    </div>
  </section>

  <section class="row row-4">
    <div class="group one">
      <div class="head solo"><h2 class="label">Room Temp.</h2></div>
      <div class="faces">
        <svg class="face" viewBox="0 0 189 189">
          <rect width="189" height="189" fill="#3a3a3e"/>
          <path d="M30 18Q94.500 22 159 18V-5H30Z" fill="#4a4a4c"/><text class="m" x="93" y="11" font-size="8" fill="#ddd">4:20</text>
          <path d="M93 34A64 64 0 0 0 93 162" fill="none" stroke="url(#ring-left)" stroke-width="10"/>
          <path d="M93 34A64 64 0 0 1 93 162" fill="none" stroke="url(#ring-right)" stroke-width="10"/>
          <circle cx="93" cy="98" r="59" fill="#4a5478"/>
          <circle cx="93" cy="99" r="38" fill="#d69aa1"/>
          <text class="m num th" x="93" y="99" font-size="33" fill="#fff">77°</text>
          <circle cx="31" cy="110" r="14" fill="#f4f4f4"/>
        </svg>
      </div>
    </div>
    <div class="group one g52">
      <div class="head solo"><h2 class="label nudge-10">Navigation</h2></div>
      <div class="faces">
        <svg class="face" viewBox="0 0 189 189">
          <rect width="189" height="189" fill="#ece8e0"/>
          <g fill="none" stroke="#fff">
            <path d="M0 75L84 60" stroke-width="8"/><path d="M42 68L49 95" stroke-width="5"/><path d="M158 90L189 102" stroke-width="5"/><path d="M86 20V60" stroke-width="3"/>
          </g>
          <path d="M17 35V58" stroke="#d8d4cc" stroke-width="1.500" fill="none"/>
          <path d="M89 60V128" stroke="#7cb0d4" stroke-width="3.500"/><path d="M89 60H182" stroke="#7cb0d4" stroke-width="6"/>
          <rect x="81" y="90" width="5" height="6" rx="1" fill="#4aa0e0"/>
          <text x="92" y="60" font-size="5.500" fill="#2f5f80">White Lion St</text>
          <text x="2" y="58" font-size="5.500" fill="#777">Left Ben Co.</text>
          <text class="m" x="54" y="107" font-size="5.500" fill="#555">DoubleTree by Hilton</text>
          <text class="m" x="54" y="115" font-size="5.500" fill="#555">Hotel London - Islington</text>
          <text class="m" x="150" y="102" font-size="5.500" fill="#555">Cubitt Gallery</text>
          <text class="m" x="150" y="109" font-size="5.500" fill="#555">And Studios</text>
          <path d="M30 18Q94.500 22 159 18V-5H30Z" fill="#f28a7a"/><text class="m" x="94" y="11" font-size="8" fill="#fff">22:10</text>
          <path d="M0 133H50Q75 133 89 126Q103 133 128 133H189V189H0Z" fill="#3a3a3e"/>
          <text class="m" x="94" y="143" font-size="10" fill="#ddd">In <tspan class="b" fill="#fff">10m</tspan> turn <tspan class="b" fill="#fff">right</tspan> on</text>
          <text class="m" x="94" y="155" font-size="10" fill="#ddd">White Lion St.</text>
          <path d="M92 168L96 172L92 176" fill="none" stroke="#fff" stroke-width="1.500"/>
        </svg>
      </div>
    </div>
    <div class="group one g54">
      <div class="head solo"><h2 class="label">Notes</h2></div>
      <div class="faces">
        <svg class="face" viewBox="0 0 189 189">
          <rect width="189" height="189" fill="#e4e4e4"/>
          <path d="M30 18Q94.500 22 159 18V-5H30Z" fill="#f0a040"/><text class="m" x="94" y="12" font-size="8" fill="#fff">22:10</text>
          <text class="m b" x="93" y="38" font-size="10.500" fill="#666">Grocery List</text>
          <g fill="#f5f5f5"><rect x="43" y="52" width="111" height="25" rx="4"/><rect x="43" y="83" width="111" height="25" rx="4"/><rect x="43" y="114" width="111" height="26" rx="4"/><rect x="43" y="146" width="111" height="25" rx="4" opacity=".55"/></g>
          <g fill="#f3a845"><circle cx="29" cy="65" r="6.500"/><circle cx="29" cy="96" r="6.500"/><circle cx="29" cy="127" r="6.500"/><circle cx="29" cy="158" r="6.500" opacity=".5"/></g>
          <g font-size="10.500" fill="#777"><text x="50" y="65">Baby Spinach</text><text x="50" y="96">Deodorant</text><text x="50" y="127">Kitchen Paper</text><text x="50" y="158" fill="#c4c4c4">Garlic &amp; Onions</text></g>
        </svg>
      </div>
    </div>
    <div class="group one g55">
      <div class="head solo env-head"><h2 class="label">Environment</h2></div>
      <div class="faces">
        <svg class="face" viewBox="0 0 189 189">
          <rect width="189" height="189" fill="#1f6f78"/>
          <path d="M30 18Q94.500 22 159 18V-5H30Z" fill="#12a3b4"/><text class="m" x="94" y="12" font-size="8" fill="#e8f7f9">22:10</text>
          <rect x="32" y="38" width="59" height="55" rx="4" fill="#a0dde8"/><rect x="95" y="38" width="58" height="55" rx="4" fill="#90e0b8"/>
          <rect x="32" y="98" width="59" height="54" rx="4" fill="#e8b490"/><rect x="95" y="98" width="58" height="54" rx="4" fill="#e89ca0"/>
          <path d="M58 93L91 60V93Z" fill="#a9e3ec"/><path d="M118 93L153 55V93Z" fill="#9ae6c0"/>
          <circle cx="38" cy="45" r="2" fill="#7fc6d4"/><circle cx="102" cy="45" r="2" fill="#5cc49b"/><circle cx="38" cy="106" r="2" fill="#cf8a5f"/><circle cx="102" cy="105" r="2.500" fill="#c96b73"/>
          <text class="m num th" x="59" y="69" font-size="23" fill="#fff">22<tspan font-size="7" dy="-7">c</tspan></text>
          <text class="m num th" x="124" y="69" font-size="23" fill="#dff5ea">60<tspan font-size="7" dy="-7">%</tspan></text>
          <text class="m num th" x="59" y="128" font-size="23" fill="#fff">22<tspan font-size="7" dy="-7">m</tspan></text>
          <text class="m num th" x="124" y="128" font-size="23" fill="#fff">1.0<tspan font-size="7" dy="-7">h</tspan></text>
        </svg>
      </div>
    </div>
    <div class="group g57">
      <div class="head wallet-head"><span class="rule rule-l"></span><h2 class="label pad-wallet">Wallet | NFC Payments</h2><span class="rule rule-r"></span></div>
      <div class="faces">
        <svg class="face" viewBox="0 0 189 189">
          <rect width="189" height="189" fill="#e4e4e4"/>
          <path d="M45 19Q94.500 17 149 19C130 4 110 0 94.500 0S60 4 45 19Z" fill="#3d3d3d"/><text class="m" x="94" y="11" font-size="8" fill="#eee">22:10</text>
          <text class="m" x="94" y="40" font-size="8.500" fill="#666">Select Payment Type</text>
          <rect x="18" y="51" width="156" height="30" rx="3" fill="#62c9a4"/><rect x="18" y="73" width="156" height="32" rx="3" fill="#99dcdc"/><rect x="18" y="96" width="156" height="29" rx="3" fill="#e8706c"/><rect x="18" y="117" width="156" height="76" rx="3" fill="#f5f5f5"/>
          <text x="27" y="63" font-size="9.500" class="sb" fill="#eafaf4">Cafe du Mont</text><text x="27" y="85" font-size="9.500" class="sb" fill="#e9fafa">Bank of HSK</text><text x="27" y="106" font-size="9.500" class="sb" fill="#fbeaea">QuickPay</text><text x="27" y="129" font-size="9.500" fill="#666">Airlines Member</text>
          <use href="#qr" x="56" y="148" width="73" height="73" class="qr-dark"/>
        </svg>
        <svg class="face g71" viewBox="0 0 189 189">
          <rect width="189" height="189" fill="#5e5e5e"/>
          <path d="M45 19Q94.500 17 149 19C130 4 110 0 94.500 0S60 4 45 19Z" fill="#1c1c1c"/><text class="m" x="94" y="11" font-size="8" fill="#666">22:10</text>
          <text class="m" x="94" y="40" font-size="8.500" fill="#2e2e2e">Select Payment Type</text>
          <rect x="18" y="51" width="156" height="30" rx="3" fill="#22584a"/><rect x="18" y="73" width="156" height="32" rx="3" fill="#2f5560"/><rect x="18" y="96" width="156" height="29" rx="3" fill="#6a2a28"/><rect x="18" y="117" width="156" height="76" rx="3" fill="#5e5e5e"/>
          <text x="27" y="63" font-size="9.500" fill="#4a7a6c">Cafe du Mont</text><text x="27" y="129" font-size="9.500" fill="#333">Airlines Member</text>
          <use href="#qr" x="56" y="148" width="73" height="73" class="qr-black"/>
          <circle cx="91" cy="51" r="16" fill="#4fb394"/><text class="m sb" x="91" y="51" font-size="15" fill="#fff">C</text>
          <circle cx="48.500" cy="97" r="16" fill="#d85e5c"/><text class="m sb" x="48.500" y="97" font-size="15" fill="#fff">Q</text>
          <circle cx="92" cy="97" r="13" fill="#8a8a8a"/>
          <circle cx="137" cy="97" r="16" fill="#84b4bc"/><text class="m sb" x="137" y="97" font-size="15" fill="#fff">B</text>
          <circle cx="93" cy="143" r="16" fill="#c4c4c4"/><text class="m sb" x="93" y="143" font-size="15" fill="#fff">A</text>
        </svg>
        <svg class="face g55" viewBox="0 0 189 189">
          <rect width="189" height="189" fill="#e6e6e6"/>
          <path d="M45 19Q94.500 17 149 19C130 4 110 0 94.500 0S60 4 45 19Z" fill="#3d3d3d"/><text class="m" x="94" y="11" font-size="8" fill="#eee">22:10</text>
          <text class="m" x="94" y="40" font-size="8.500" fill="#666">Selection</text>
          <rect x="15" y="51" width="157" height="12" rx="2" fill="#62c9a4"/><rect x="15" y="56" width="157" height="10" rx="2" fill="#e8706c"/><rect x="15" y="61" width="157" height="9" rx="2" fill="#fff"/>
          <rect x="15" y="66" width="157" height="117" rx="4" fill="#90d9da"/>
          <text class="m" x="93" y="77" font-size="9.500" fill="#eef">Bank of HSK</text>
          <use href="#qr" x="57" y="95" width="73" height="73" class="qr-white"/>
        </svg>
        <svg class="face g40" viewBox="0 0 189 189">
          <rect width="189" height="189" fill="#e6e6e6"/>
          <path d="M45 19Q94.500 17 149 19C130 4 110 0 94.500 0S60 4 45 19Z" fill="#3d3d3d"/><text class="m" x="94" y="11" font-size="8" fill="#eee">22:10</text>
          <text class="m" x="94" y="40" font-size="8.500" fill="#666">Selection</text>
          <rect x="15" y="51" width="157" height="12" rx="2" fill="#a4dcdc"/><rect x="15" y="56" width="157" height="10" rx="2" fill="#e8706c"/><rect x="15" y="61" width="157" height="9" rx="2" fill="#fff"/>
          <rect x="15" y="66" width="157" height="117" rx="4" fill="#62c9a4"/>
          <text class="m" x="93" y="77" font-size="9.500" fill="#eff">Cafe du Mont</text>
          <use href="#qr" x="57" y="95" width="73" height="73" class="qr-white"/>
        </svg>
        <svg class="face g56" viewBox="0 0 189 189">
          <rect width="189" height="189" fill="#e6e6e6"/>
          <path d="M45 19Q94.500 17 149 19C130 4 110 0 94.500 0S60 4 45 19Z" fill="#3d3d3d"/><text class="m" x="94" y="11" font-size="8" fill="#eee">22:10</text>
          <text class="m" x="94" y="40" font-size="8.500" fill="#666">Selection</text>
          <rect x="15" y="51" width="157" height="12" rx="2" fill="#62c9a4"/><rect x="15" y="56" width="157" height="10" rx="2" fill="#a4dcdc"/><rect x="15" y="61" width="157" height="9" rx="2" fill="#fff"/>
          <rect x="15" y="66" width="157" height="117" rx="4" fill="#e8706c"/>
          <text class="m" x="93" y="77" font-size="9.500" fill="#fee">Quick Pay</text>
          <use href="#qr" x="57" y="95" width="73" height="73" class="qr-white"/>
        </svg>
      </div>
    </div>
  </section>
</main>
</body>
</html>
```
FILE: styles.css
```css
* { box-sizing: border-box; }
html, body { margin: 0; padding: 0; background: #fff; }
.defs { display: block; width: 0; height: 0; overflow: hidden; }
.sheet { width: 2560px; height: 1440px; padding-top: 105px; overflow: hidden; font-family: "Lato", "Liberation Sans", sans-serif; }

.top { display: flex; align-items: flex-start; }
.top-left { display: flex; flex-direction: column; }
.row { display: flex; align-items: flex-start; }
.row-1 { padding-left: 193px; }
.row-2 { padding-left: 190px; margin-top: 74px; }
.row-3 { padding-left: 194px; margin-top: 73px; }
.row-4 { padding-left: 193px; margin-top: 76px; }

.group { display: flex; flex-direction: column; flex: none; }
.one { width: 189px; }
.home-group { width: 401px; }
.faces { display: flex; }
.face { display: block; flex: none; width: 189px; height: 189px; clip-path: circle(50%); }
.face.home { width: 401px; height: 401px; }

.head { display: flex; height: 46px; margin-bottom: 23px; }
.row-2 .head { margin-bottom: 20px; }
.row-3 .head { margin-bottom: 19px; }
.row-4 .head { margin-bottom: 17px; }
.row-4 .env-head { margin-bottom: 19px; }
.head.solo { justify-content: center; }
.head.solo .label { flex: none; }
.head.home-head { margin-bottom: 32px; }
.notif-head { padding-left: 9px; padding-right: 1px; }
.calls-head { padding-left: 15px; padding-right: 1px; padding-top: 1px; }
.head.solo.calls-head { padding: 2px 0 0; }
.clock-head { padding-left: 5px; padding-right: 4px; }
.voice-head { padding-left: 1px; padding-right: 4px; }
.wallet-head { padding-left: 1px; padding-right: 4px; }

.rule { flex: 1; height: 31px; margin-top: 14px; border-top: 2px solid #808080; }
.rule-l { border-left: 2px solid #808080; }
.rule-r { border-right: 2px solid #808080; }

.label { margin: 0; height: 30px; line-height: 30px; font-size: 24px; font-weight: 400; letter-spacing: 2.3px; color: #808080; white-space: nowrap; }
.pad-watch { padding: 0 35px 0 41px; }
.pad-notif { padding: 0 27px 0 28px; }
.pad-heath { padding: 0 26px 0 21px; }
.pad-calls { padding: 0 56px 0 66px; }
.pad-clock { padding: 0 39px 0 31px; }
.pad-voice { padding: 0 24px 0 28px; }
.pad-wallet { padding: 0 26px 0 30px; }
.nudge-10 { padding-left: 10px; }
.nudge-12 { padding-left: 12px; }
.nudge-16 { padding-left: 16px; }

.g40 { margin-left: 40px; }
.g49 { margin-left: 49px; }
.g51 { margin-left: 51px; }
.g52 { margin-left: 52px; }
.g53 { margin-left: 53px; }
.g54 { margin-left: 54px; }
.g55 { margin-left: 55px; }
.g56 { margin-left: 56px; }
.g57 { margin-left: 57px; }
.g59 { margin-left: 59px; }
.g62 { margin-left: 62px; }
.g63 { margin-left: 63px; }
.g71 { margin-left: 71px; }

svg text { font-family: "Inter", "Liberation Sans", sans-serif; dominant-baseline: central; }
svg text.num { font-family: "Lato", "Liberation Sans", sans-serif; }
.m { text-anchor: middle; }
.e { text-anchor: end; }
.b { font-weight: 700; }
.sb { font-weight: 500; }
.th { font-weight: 300; }
.big10 { letter-spacing: -1px; }
.tesla { letter-spacing: 2px; }
.qr-dark { color: #3a3a3a; }
.qr-black { color: #1b1b1b; }
.qr-white { color: #fff; }
```
